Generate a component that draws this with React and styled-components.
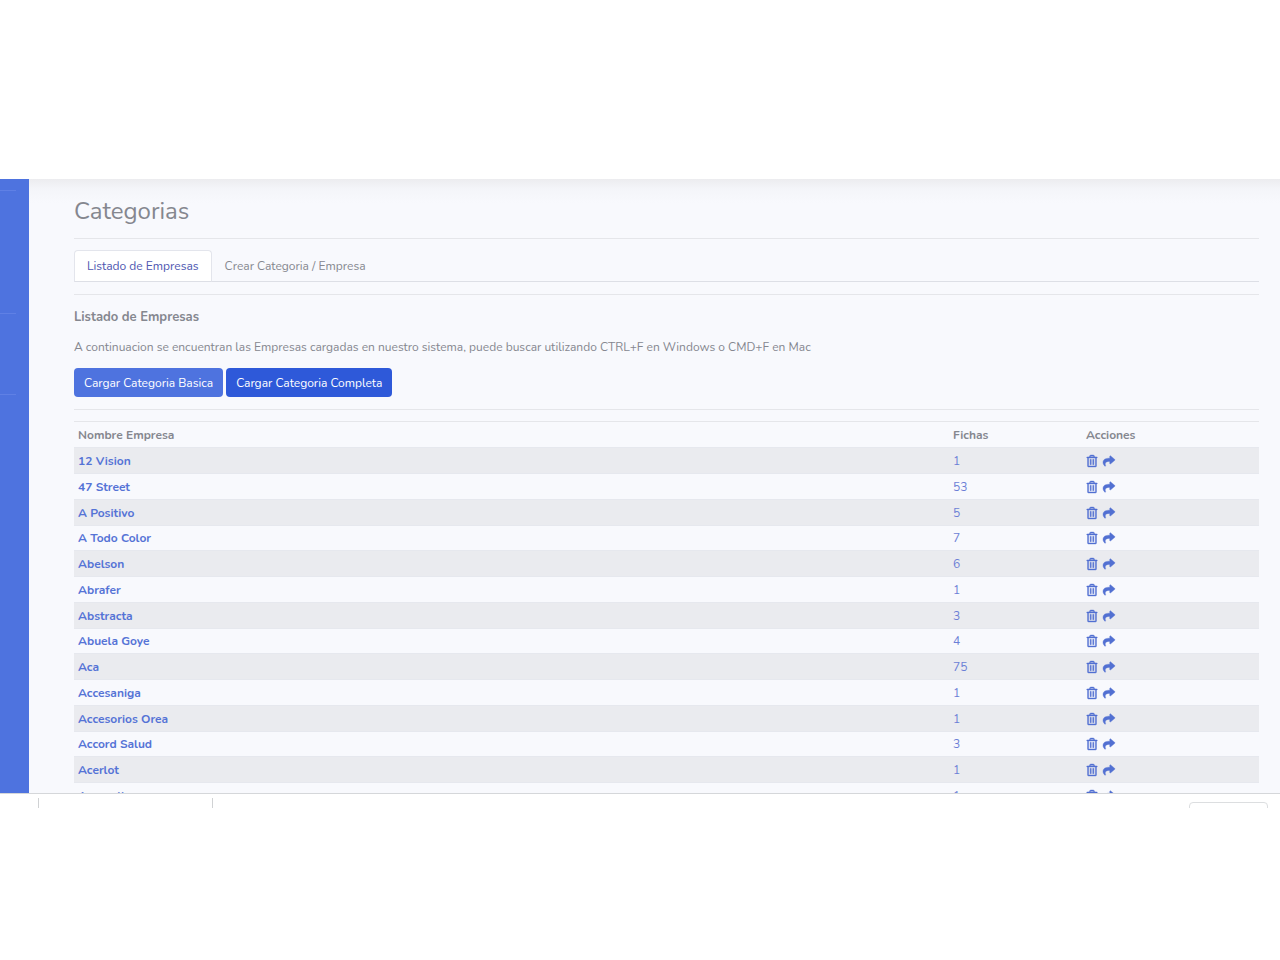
import styled, { createGlobalStyle } from 'styled-components';
import { useState } from 'react';
import { FaRegTrashAlt, FaShare } from 'react-icons/fa';

const GlobalStyle = createGlobalStyle`
* {
  box-sizing: border-box;
}
body {
  margin: 0;
  background: #ffffff;
  color: #858796;
  font-family: Nunito, Lato, sans-serif;
  font-size: 12px;
  line-height: 20px;
}
`;
const Page = styled.div`
display: flex;
flex-direction: column;
height: 100vh;
padding: 179px 0 152px;
`;
const Wrapper = styled.div`
display: flex;
flex: 1;
min-height: 0;
overflow: hidden;
`;
const Sidebar = styled.nav`
flex: none;
width: 29px;
padding-right: 13px;
background: #4e73df;
`;
const SidebarSection = styled.div`
height: ${({ $height }) => $height}px;
border-bottom: 1px solid #5f80e5;
`;
const Content = styled.main`
flex: 1;
min-width: 0;
padding: 17px 21px 0 45px;
background: linear-gradient(#ececef, #f4f5f9 10px, #f8f9fd 24px);
`;
const Title = styled.h1`
margin: 0;
font-size: 24px;
line-height: 30px;
font-weight: 400;
color: #85878f;
`;
const Divider = styled.hr`
margin: 12px 0 11px;
border: 0;
border-top: 1px solid #e5e6ea;
`;
const Tabs = styled.div`
display: flex;
border-bottom: 1px solid #dddfe6;
`;
const Tab = styled.button`
height: 32px;
margin-bottom: -1px;
padding: 0 12px;
border: 1px solid ${({ $active }) => ($active ? '#e3e5ec' : 'transparent')};
border-bottom-color: ${({ $active }) => ($active ? '#dddfe6' : 'transparent')};
border-radius: 4px 4px 0 0;
background: ${({ $active }) => ($active ? '#ffffff' : 'transparent')};
color: ${({ $active }) => ($active ? '#4e56b0' : '#85878f')};
font: inherit;
cursor: pointer;
`;
const Subtitle = styled.h2`
margin: 0;
font-size: 13px;
line-height: 22px;
font-weight: 700;
color: #85878f;
`;
const Description = styled.p`
margin: 9px 0 11px;
color: #85878f;
`;
const Actions = styled.div`
display: flex;
gap: 3px;
`;
const Button = styled.button`
height: 29px;
padding: 0 10px;
border: 0;
border-radius: 4px;
background: ${({ $dark }) => ($dark ? '#2e59d9' : '#4e73df')};
color: #ffffff;
font: inherit;
cursor: pointer;
`;
const Table = styled.table`
width: 100%;
border-collapse: collapse;
table-layout: fixed;
`;
const HeaderCell = styled.th`
width: ${({ $width }) => $width || 'auto'};
height: 26px;
padding: 0 4px;
border-top: 1px solid #e5e6ea;
text-align: left;
font-weight: 700;
color: #85878f;
`;
const Row = styled.tr`
height: 26px;
&:nth-child(odd) {
  background: #eaebef;
}
&:nth-child(4n) {
  height: 25px;
}
`;
const Cell = styled.td`
padding: 0 4px;
border-top: 1px solid #e6e8ee;
`;
const CompanyLink = styled.a`
color: #5573d6;
font-weight: 700;
text-decoration: none;
`;
const Count = styled.a`
color: #6c7fd6;
text-decoration: none;
`;
const RowActions = styled.div`
display: flex;
gap: 5px;
`;
const IconButton = styled.button`
display: flex;
padding: 0;
border: 0;
background: none;
color: #5270d2;
cursor: pointer;
svg {
  width: auto;
  height: 12px;
  overflow: visible;
  stroke-width: 16px;
}
`;
const BottomBar = styled.footer`
display: flex;
justify-content: space-between;
flex: none;
height: 15px;
padding: 4px 12px 0 38px;
border-top: 1px solid #d5d7da;
overflow: hidden;
`;
const BottomItem = styled.div`
width: 175px;
border: 1px solid #d0d2d4;
border-width: 0 1px;
`;
const BottomBox = styled.div`
width: 79px;
height: 24px;
margin-top: 4px;
border: 1px solid #dcdee0;
border-radius: 4px;
`;

const companies = [
  { name: '12 Vision', fichas: 1 },
  { name: '47 Street', fichas: 53 },
  { name: 'A Positivo', fichas: 5 },
  { name: 'A Todo Color', fichas: 7 },
  { name: 'Abelson', fichas: 6 },
  { name: 'Abrafer', fichas: 1 },
  { name: 'Abstracta', fichas: 3 },
  { name: 'Abuela Goye', fichas: 4 },
  { name: 'Aca', fichas: 75 },
  { name: 'Accesaniga', fichas: 1 },
  { name: 'Accesorios Orea', fichas: 1 },
  { name: 'Accord Salud', fichas: 3 },
  { name: 'Acerlot', fichas: 1 },
  { name: 'Acuarella', fichas: 1 },
];

function CompanyRow({ name, fichas }) {
  return (
    <Row>
      <Cell>
        <CompanyLink href="#empresa">{name}</CompanyLink>
      </Cell>
      <Cell>
        <Count href="#fichas">{fichas}</Count>
      </Cell>
      <Cell>
        <RowActions>
          <IconButton type="button" aria-label={`Eliminar ${name}`}>
            <FaRegTrashAlt />
          </IconButton>
          <IconButton type="button" aria-label={`Compartir ${name}`}>
            <FaShare />
          </IconButton>
        </RowActions>
      </Cell>
    </Row>
  );
}

function App() {
  const [tab, setTab] = useState('listado');
  return (
    <Page>
      <GlobalStyle />
      <Wrapper>
        <Sidebar>
          <SidebarSection $height={12} />
          <SidebarSection $height={123} />
          <SidebarSection $height={81} />
        </Sidebar>
        <Content>
          <Title>Categorias</Title>
          <Divider />
          <Tabs role="tablist">
            <Tab
              type="button"
              role="tab"
              aria-selected={tab === 'listado'}
              $active={tab === 'listado'}
              onClick={() => setTab('listado')}
            >
              Listado de Empresas
            </Tab>
            <Tab
              type="button"
              role="tab"
              aria-selected={tab === 'crear'}
              $active={tab === 'crear'}
              onClick={() => setTab('crear')}
            >
              Crear Categoria / Empresa
            </Tab>
          </Tabs>
          <Divider />
          <Subtitle>Listado de Empresas</Subtitle>
          <Description>
            A continuacion se encuentran las Empresas cargadas en nuestro sistema, puede buscar
            utilizando CTRL+F en Windows o CMD+F en Mac
          </Description>
          <Actions>
            <Button type="button">Cargar Categoria Basica</Button>
            <Button type="button" $dark>Cargar Categoria Completa</Button>
          </Actions>
          <Divider />
          <Table>
            <thead>
              <tr>
                <HeaderCell>Nombre Empresa</HeaderCell>
                <HeaderCell $width="133px">Fichas</HeaderCell>
                <HeaderCell $width="177px">Acciones</HeaderCell>
              </tr>
            </thead>
            <tbody>
              {companies.map((company) => (
                <CompanyRow key={company.name} {...company} />
              ))}
            </tbody>
          </Table>
        </Content>
      </Wrapper>
      <BottomBar>
        <BottomItem />
        <BottomBox />
      </BottomBar>
    </Page>
  );
}

export default App;
